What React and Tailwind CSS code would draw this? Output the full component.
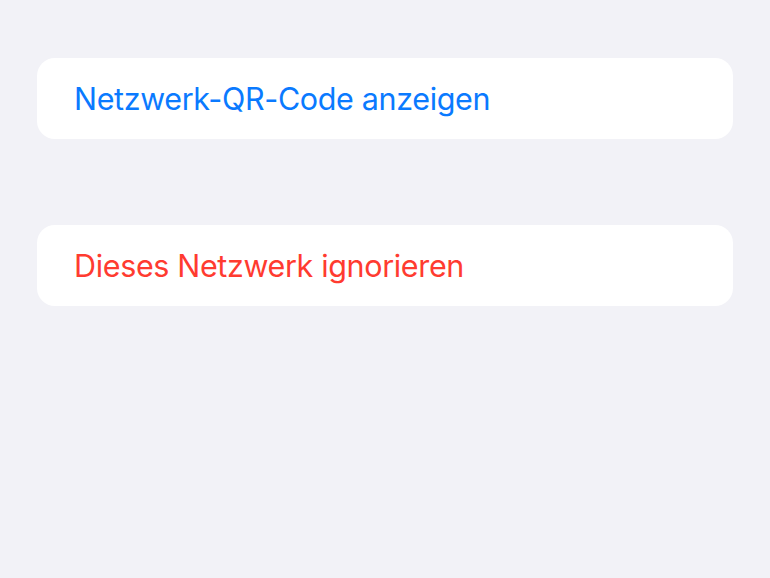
export default function App() {
  return (
    <div className="w-[770px] h-[578px] bg-[#f2f2f7] pt-[58px] px-[37px] font-['Inter','Noto_Sans',sans-serif]">
      <div className="w-[696px] h-[81px] bg-white rounded-[18px] flex items-center pl-[37px]">
        <span className="text-[30.5px] tracking-[-0.35px] text-[#0a7aff]">Netzwerk-QR-Code anzeigen</span>
      </div>
      <div className="w-[696px] h-[81px] bg-white rounded-[18px] flex items-center pl-[37px] mt-[86px]">
        <span className="text-[30.5px] tracking-[-0.35px] text-[#ff3b30]">Dieses Netzwerk ignorieren</span>
      </div>
    </div>
  );
}
